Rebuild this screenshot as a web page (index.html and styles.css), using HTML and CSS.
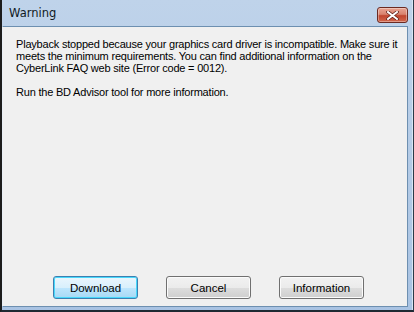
FILE: index.html
```html
<!DOCTYPE html>
<html lang="en">

<head>
  <meta charset="UTF-8">
  <meta name="viewport" content="width=device-width, initial-scale=1.0">
  <title>Warning</title>
  <link rel="stylesheet" href="styles.css">
</head>

<body>
  <div class="window">
    <div class="titlebar">
      <span class="title">Warning</span>
      <button class="close" type="button" aria-label="Close">
        <svg width="13" height="9" viewBox="0 0 13 9">
          <path d="M2 1 L11 8 M11 1 L2 8" stroke="#5a1a12" stroke-width="3.4" stroke-linecap="square" fill="none"/>
          <path d="M2 1 L11 8 M11 1 L2 8" stroke="#fff" stroke-width="2" stroke-linecap="square" fill="none"/>
        </svg>
      </button>
    </div>
    <div class="content">
      <p class="msg">Playback stopped because your graphics card driver is incompatible. Make sure it meets the minimum requirements. You can find additional information on the CyberLink FAQ web site (Error code = 0012).</p>
      <p class="msg">Run the BD Advisor tool for more information.</p>
      <div class="actions">
        <button type="button" class="btn default">Download</button>
        <button type="button" class="btn">Cancel</button>
        <button type="button" class="btn">Information</button>
      </div>
    </div>
  </div>
</body>
</html>
```

FILE: styles.css
```css
* {
  margin: 0;
  padding: 0;
  box-sizing: border-box;
}
body {
  width: 414px;
  height: 312px;
  overflow: hidden;
  font-family: "Liberation Sans", Arial, sans-serif;
  font-size: 11px;
  color: #000;
}
.window {
  width: 414px;
  height: 312px;
  display: flex;
  flex-direction: column;
  background: linear-gradient(#bfd3ea, #a9c3e3);
  border-left: 2px solid #1c1c1c;
  border-right: 1px solid #2a3a48;
  border-bottom: 2px solid #1f2a33;
  padding: 0 5px 3px 0;
  box-shadow: inset -1px 0 0 #d8e6f4;
}
.titlebar {
  height: 26px;
  display: flex;
  align-items: flex-start;
  justify-content: space-between;
  padding-left: 7px;
}
.title {
  font-family: "DejaVu Sans", sans-serif;
  font-size: 11.5px;
  color: #111a24;
  margin-top: 6px;
}
.close {
  width: 31px;
  height: 16px;
  margin-top: 7px;
  border: 1px solid #6b2a22;
  border-radius: 3px;
  background: linear-gradient(#e8a493 0%, #d9836e 45%, #c0452e 55%, #d2674c 100%);
  box-shadow: inset 0 0 0 1px rgba(255,255,255,.35);
  display: flex;
  align-items: center;
  justify-content: center;
}
.content {
  flex: 1;
  background: #f0f0f0;
  border: 1px solid #6d8fb0;
  border-left-color: #e8eef5;
  display: flex;
  flex-direction: column;
  padding: 11px 4px 7px 13px;
}
.msg {
  line-height: 12px;
  margin-bottom: 12px;
  letter-spacing: -0.2px;
}
.actions {
  margin-top: auto;
  display: flex;
  gap: 28px;
  padding-left: 37px;
}
.btn {
  width: 85px;
  height: 23px;
  font: inherit;
  font-size: 11.5px;
  color: #000;
  border: 1px solid #707070;
  border-radius: 3px;
  background: linear-gradient(#f2f2f2 0%, #ebebeb 50%, #dddddd 51%, #cfcfcf 100%);
  box-shadow: inset 0 0 0 1px #fbfbfb;
}
.btn.default {
  border-color: #3c7fb1;
  box-shadow: inset 0 0 0 1px #48d8fb;
  background: linear-gradient(#eaf6fd 0%, #d9f0fc 50%, #bee6fd 51%, #a7d9f5 100%);
}
```
